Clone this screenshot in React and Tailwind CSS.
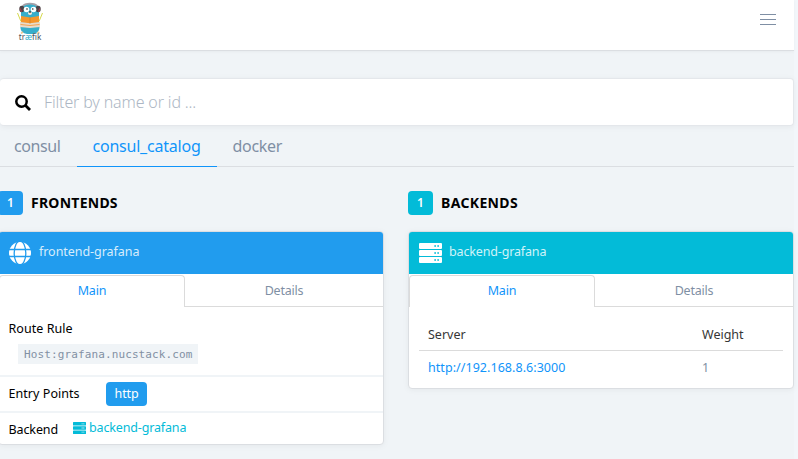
const shadow = "shadow-[0_1px_6px_rgba(0,0,0,0.05)]";

function Logo() {
  return (
    <svg width="28" height="41" viewBox="0 0 28 41" className="ml-4 mt-[2px]">
      <path d="M5 8V20C2.500 31.500 9 32 14 32S25.500 31.500 23 20V8C23 3 19 1.800 14 1.800S5 3 5 8Z" fill="#37aecb" />
      <path d="M6.500 4.500C9 .6 19 .6 21.500 4.500" fill="none" stroke="#a5a1a9" strokeWidth="1.600" />
      <ellipse cx="5.800" cy="7" rx="2.500" ry="3.200" fill="#4a4347" />
      <ellipse cx="22.200" cy="7" rx="2.500" ry="3.200" fill="#4a4347" />
      <path d="M4.200 6.500L5.500 9.800M23.800 6.500L22.500 9.800" stroke="#a93f4a" strokeWidth="1.200" />
      <circle cx="10.500" cy="7.500" r="2.800" fill="#fff" />
      <circle cx="17.500" cy="7.500" r="2.800" fill="#fff" />
      <circle cx="11" cy="7" r=".8" fill="#222" />
      <circle cx="16.800" cy="7" r=".8" fill="#222" />
      <ellipse cx="14" cy="11.200" rx="2" ry="1.700" fill="#f5e8dd" />
      <ellipse cx="14" cy="10" rx="1.200" ry=".8" fill="#222" />
      <path d="M1.500 11L5 19.500M26.500 11L23 19.500" stroke="#d5d94c" strokeWidth="1" />
      <path d="M5 14L14 15.500L23 14V20.500L14 21.500L5 20.500Z" fill="#f5962c" />
      <path d="M4 20L14 21.200L24 20V25L14 26L4 25Z" fill="#eadccb" />
      <path d="M4.500 22.500L14 23.500L23.500 22.500" fill="none" stroke="#f2a251" />
      <path d="M14 15.500V21.500" stroke="#d67b20" strokeWidth=".7" />
      <path d="M7 30L5 31.300M21.500 30L23.500 31.300" stroke="#efc48f" strokeWidth="1.500" />
      <text x="2.800" y="38" textLength="22.500" lengthAdjust="spacingAndGlyphs" fontSize="8" fontFamily="Noto Sans, sans-serif" fill="#46535d">
        tr<tspan fill="#37aecb">æ</tspan>fik
      </text>
    </svg>
  );
}

function GlobeIcon() {
  return (
    <svg viewBox="0 0 22 22" className="size-[22px]">
      <circle cx="11" cy="11" r="11" fill="currentColor" />
      <g fill="none" stroke="#219cee" strokeWidth="1.300">
        <ellipse cx="11" cy="11" rx="5.800" ry="12" />
        <path d="M0 7.500H22M0 14.500H22" />
      </g>
    </svg>
  );
}

function ServerIcon({ className }) {
  return (
    <svg viewBox="0 0 23 20" className={className} preserveAspectRatio="none">
      {[0, 7, 14].map((y) => (
        <path
          key={y}
          fill="currentColor"
          fillRule="evenodd"
          d={`M1 ${y}H22Q23 ${y} 23 ${y + 1}V${y + 5}Q23 ${y + 6} 22 ${y + 6}H1Q0 ${y + 6} 0 ${y + 5}V${y + 1}Q0 ${y} 1 ${y}ZM15.300 ${y + 2.300}V${y + 3.700}H17V${y + 2.300}ZM18.300 ${y + 2.300}V${y + 3.700}H20V${y + 2.300}Z`}
        />
      ))}
    </svg>
  );
}

function Tabs() {
  return (
    <div className="flex h-[33px] pt-px text-center text-[12.500px] leading-[29px] tracking-[-0.2px]">
      <div className="w-[186px] rounded-t border border-b-0 border-[#dbdbdb] text-[#1094fa]">Main</div>
      <div className="flex-1 border-b border-[#dbdbdb] pt-px text-[#7f8fa4]">Details</div>
    </div>
  );
}

function Heading({ title, badge, tracking }) {
  return (
    <div className="flex h-6 items-center gap-2">
      <span className={`flex h-6 w-[25px] items-center justify-center rounded text-[12px] font-semibold text-white ${badge}`}>1</span>
      <h2 className={`mb-[2px] text-[14px] font-bold text-black ${tracking}`}>{title}</h2>
    </div>
  );
}

export default function App() {
  return (
    <div className="h-[459px] w-[798px] overflow-hidden bg-[#f2f6fa] font-['Noto_Sans',sans-serif]">
      <div className="h-[459px] w-[794px] bg-[#f0f4f7]">
        <header className="flex h-[51px] justify-between border-b border-[#dbdee2] bg-white shadow-[0_1px_3px_rgba(0,0,0,0.04)]">
          <Logo />
          <div className="mr-[18px] mt-[14px] flex h-[11px] w-4 flex-col justify-between">
            <i className="h-px bg-[#7f8fa4]" />
            <i className="h-px bg-[#7f8fa4]" />
            <i className="h-px bg-[#7f8fa4]" />
          </div>
        </header>

        <div className={`mt-[27px] flex h-12 items-center rounded-sm border border-l-0 border-[#e4e7eb] bg-white pl-[15px] ${shadow}`}>
          <svg viewBox="0 0 16 16" className="mt-[2px] size-4" fill="none" stroke="#000">
            <circle cx="6.500" cy="6.500" r="5.200" strokeWidth="2.500" />
            <path d="M10.300 10.300L15 15" strokeWidth="2.800" />
          </svg>
          <span className="ml-[13px] text-[16px] font-light tracking-[-0.15px] text-[#adb7c4]">Filter by name or id ...</span>
        </div>

        <nav className="flex h-[41px] border-b border-[#dbdee2] text-[16px] leading-10 text-[#7f8fa4]">
          <span className="w-[77px] pl-[14px] tracking-[-0.4px]">consul</span>
          <span className="h-[41px] w-[140px] border-b border-[#1094fa] pl-[15.500px] tracking-[-0.22px] text-[#1094fa]">consul_catalog</span>
          <span className="pl-[15.500px] tracking-[-0.3px]">docker</span>
        </nav>

        <main className="-ml-0.5 mt-6 flex items-start gap-6">
          <section className="w-[386px]">
            <Heading title="FRONTENDS" badge="bg-[#219cee]" tracking="tracking-[0.25px]" />
            <div className={`mt-4 h-[214px] overflow-hidden rounded border border-[#dbdee2] bg-white ${shadow}`}>
              <div className="flex h-[42px] items-center bg-[#219cee] pl-[10px] text-white">
                <GlobeIcon />
                <span className="mb-[2px] ml-2 text-[12.500px] tracking-[-0.05px] text-[#d6ecfc]">frontend-grafana</span>
              </div>
              <Tabs />
              <div className="h-[70px] border-b-2 border-[#f0f4f7] pl-[9.500px] pt-3 text-[12.500px] leading-[19px] text-black">
                <div className="tracking-[0.05px]">Route Rule</div>
                <code className="ml-[9.500px] mt-[6px] block h-5 w-[180px] bg-[#f0f4f7] pl-[6px] font-['DejaVu_Sans_Mono',monospace] text-[11px] leading-[21px] tracking-[0.12px] text-[#8290a3]">Host:grafana.nucstack.com</code>
              </div>
              <div className="flex h-9 items-center border-b-2 border-[#f0f4f7] pl-[9.500px] text-[12.500px] text-black">
                <span className="w-[97.500px] tracking-[0.05px]">Entry Points</span>
                <span className="h-6 w-[41px] rounded bg-[#219cee] text-center leading-6 tracking-[-0.15px] text-white">http</span>
              </div>
              <div className="flex h-[31px] items-center pl-[9.500px] text-[12.500px] text-black">
                <span className="mt-[3px] w-[64.500px] tracking-[-0.1px]">Backend</span>
                <ServerIcon className="-mt-px h-3 w-[13px] text-[#03bbd8]" />
                <span className="ml-[3px] tracking-[-0.15px] text-[#03bbd8]">backend-grafana</span>
              </div>
            </div>
          </section>

          <section className="w-[386px]">
            <Heading title="BACKENDS" badge="bg-[#03bbd8]" tracking="tracking-[0.35px]" />
            <div className={`mt-4 h-[158px] overflow-hidden rounded border border-[#dbdee2] bg-white ${shadow}`}>
              <div className="flex h-[42px] items-center bg-[#03bbd8] pl-[10px] text-white">
                <ServerIcon className="h-5 w-[23px]" />
                <span className="mb-[2px] ml-[7px] text-[12.500px] tracking-[-0.15px] text-[#d0f3f8]">backend-grafana</span>
              </div>
              <Tabs />
              <div className="mx-[10px] mt-3 text-[12.500px]">
                <div className="flex h-8 items-center border-b border-[#dbdbdb] pl-[9px] pt-[2px] text-[#363636]">
                  <span className="w-[274px]">Server</span>
                  <span>Weight</span>
                </div>
                <div className="flex h-[33px] items-center pl-[9px] pt-[2px] text-[#7f8fa4]">
                  <span className="w-[274px] tracking-[0.05px] text-[#1094fa]">http://192.168.8.6:3000</span>
                  <span>1</span>
                </div>
              </div>
            </div>
          </section>
        </main>
      </div>
    </div>
  );
}
